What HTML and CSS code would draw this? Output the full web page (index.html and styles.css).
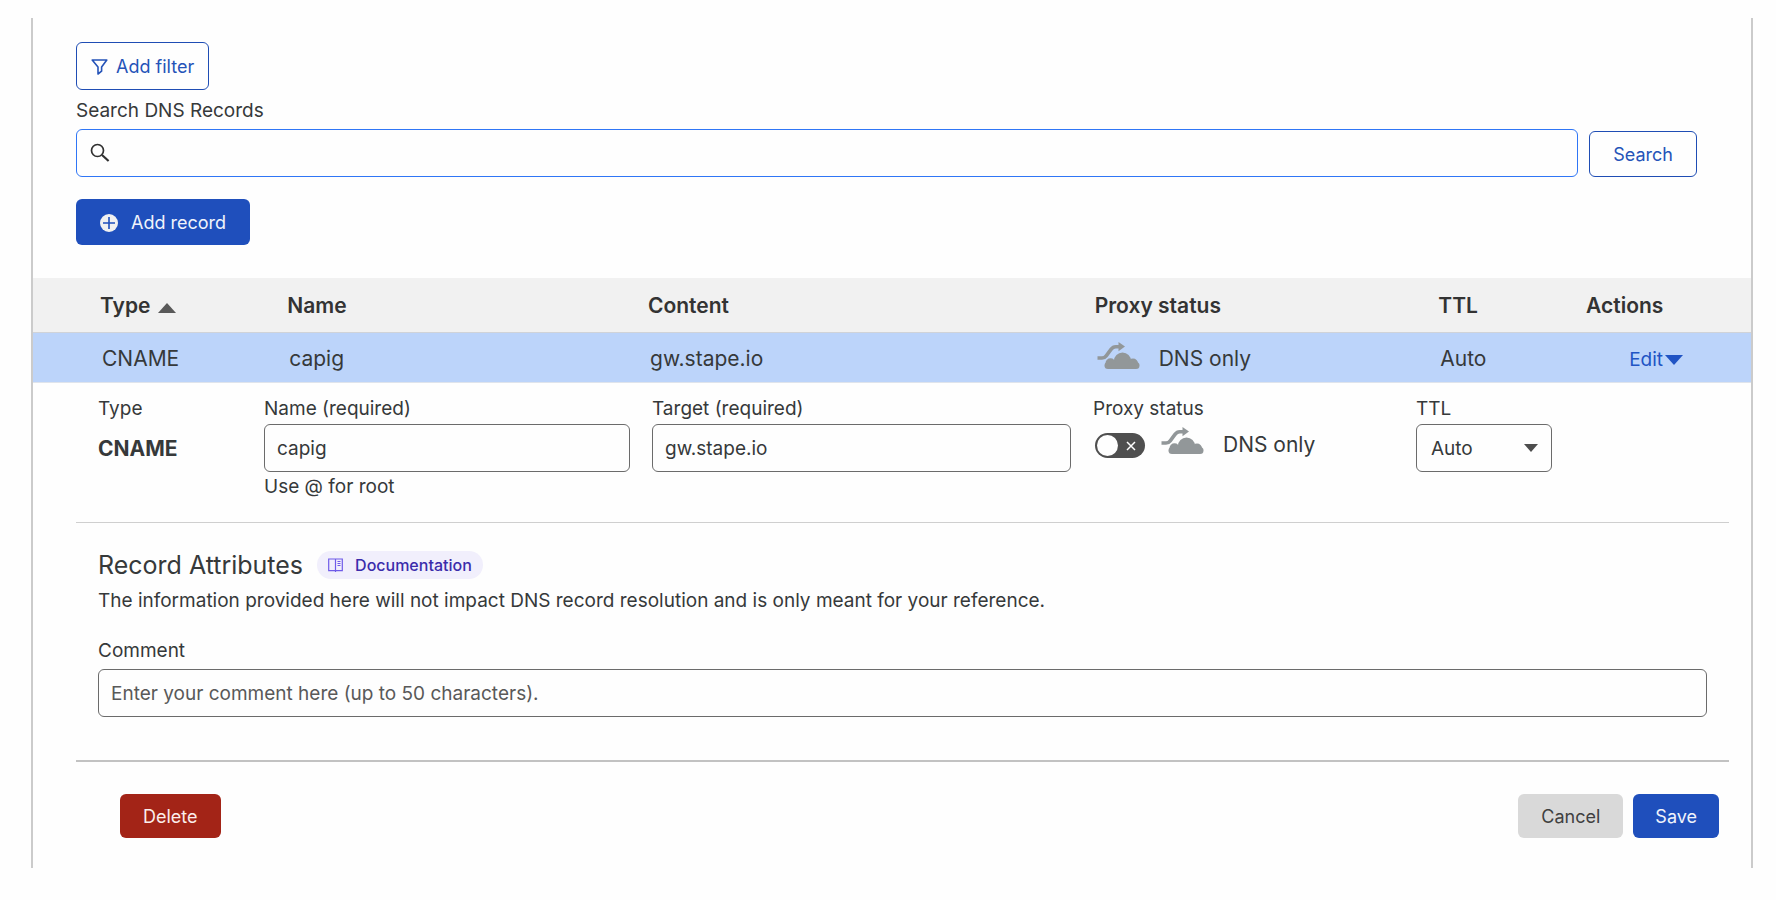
FILE: index.html
```html
<!DOCTYPE html>
<html lang="en">
<head>
<meta charset="utf-8">
<title>DNS Records</title>
<link rel="stylesheet" href="styles.css">
</head>
<body>
<svg class="sprite" aria-hidden="true">
  <symbol id="cloud" viewBox="0 0 43 27">
    <path d="M.5 16H5c2 0 3.200-.9 4.200-2.200L14 7.400c1.300-1.800 2.600-2.700 4.800-2.700H23" fill="none" stroke="currentColor" stroke-width="3.600"/>
    <path d="M21.500 0l6.500 4.500-6.500 4.700z" fill="currentColor"/>
    <g fill="currentColor">
      <circle cx="25.500" cy="19" r="8.600"/>
      <circle cx="13.500" cy="21.200" r="5"/>
      <circle cx="36" cy="21.500" r="5"/>
      <rect x="7.500" y="20" width="35" height="7" rx="3.500"/>
    </g>
  </symbol>
</svg>
<main class="panel">
  <form class="toolbar">
    <button type="button" class="btn btn-outline btn-filter">
      <svg class="icon" width="17" height="16" viewBox="0 0 17 16" aria-hidden="true"><path d="M1.200 1h14.600L10.600 8v4.200L7 15V8z" fill="none" stroke="currentColor" stroke-width="1.600" stroke-linejoin="round"/></svg>
      Add filter
    </button>
    <label class="label" for="search">Search DNS Records</label>
    <div class="search-row">
      <div class="search-box">
        <svg class="icon search-icon" width="20" height="20" viewBox="0 0 20 20" aria-hidden="true"><circle cx="7.500" cy="7.500" r="6" fill="none" stroke="currentColor" stroke-width="1.700"/><path d="M12 12l6.600 6" fill="none" stroke="currentColor" stroke-width="2.200"/></svg>
        <input id="search" class="search-input" type="text">
      </div>
      <button type="button" class="btn btn-outline">Search</button>
    </div>
    <button type="button" class="btn btn-primary btn-add">
      <svg class="icon" width="18" height="18" viewBox="0 0 18 18" aria-hidden="true"><circle cx="9" cy="9" r="9" fill="#f1f1f1"/><path d="M9 3v12M3 9h12" stroke="#1f4fbc" stroke-width="1.600"/></svg>
      Add record
    </button>
  </form>

  <table class="records">
    <colgroup><col class="c-type"><col class="c-name"><col class="c-content"><col class="c-proxy"><col class="c-ttl"><col class="c-actions"></colgroup>
    <thead>
      <tr>
        <th scope="col">Type <svg class="sort" width="18" height="10" viewBox="0 0 18 10" aria-hidden="true"><path d="M9 0l9 10H0z" fill="#595959"/></svg></th>
        <th scope="col">Name</th>
        <th scope="col">Content</th>
        <th scope="col">Proxy status</th>
        <th scope="col">TTL</th>
        <th scope="col">Actions</th>
      </tr>
    </thead>
    <tbody>
      <tr>
        <td>CNAME</td>
        <td>capig</td>
        <td>gw.stape.io</td>
        <td><span class="status"><svg class="cloud" width="43" height="27" aria-hidden="true"><use href="#cloud"/></svg>DNS only</span></td>
        <td>Auto</td>
        <td class="actions"><button type="button" class="edit">Edit<svg width="18" height="10" viewBox="0 0 18 10" aria-hidden="true"><path d="M0 0h18L9 10z" fill="currentColor"/></svg></button></td>
      </tr>
    </tbody>
  </table>

  <form class="editor">
    <div class="fields">
      <div class="field">
        <span class="label">Type</span>
        <strong class="type-value">CNAME</strong>
      </div>
      <div class="field">
        <label class="label" for="name">Name (required)</label>
        <input id="name" class="input" type="text" value="capig">
        <span class="label">Use @ for root</span>
      </div>
      <div class="field">
        <label class="label" for="target">Target (required)</label>
        <input id="target" class="input" type="text" value="gw.stape.io">
      </div>
      <div class="field">
        <label class="label" for="proxy">Proxy status</label>
        <div class="proxy-row">
          <span class="toggle">
            <input id="proxy" class="toggle-input" type="checkbox">
            <svg class="toggle-x" width="10" height="10" viewBox="0 0 10 10" aria-hidden="true"><path d="M1 1l8 8M9 1L1 9" stroke="#fff" stroke-width="1.500"/></svg>
          </span>
          <span class="status"><svg class="cloud" width="43" height="27" aria-hidden="true"><use href="#cloud"/></svg>DNS only</span>
        </div>
      </div>
      <div class="field">
        <label class="label" for="ttl">TTL</label>
        <div class="select">
          <select id="ttl" class="input"><option>Auto</option></select>
          <svg class="select-arrow" width="14" height="8" viewBox="0 0 14 8" aria-hidden="true"><path d="M0 0h14L7 8z" fill="#4d4d4d"/></svg>
        </div>
      </div>
    </div>

    <section class="attributes">
      <div class="heading-row">
        <h2 class="heading">Record Attributes</h2>
        <a class="badge" href="#">
          <svg width="15" height="14" viewBox="0 0 15 14" aria-hidden="true"><path d="M.7 1h6.800v11.600H.7zM7.500 1h6.800v11.600H7.500zM7.500 12v2M9.500 3.500h3M9.500 5.500h3M9.500 7.500h3" fill="none" stroke="#6f5be8" stroke-width="1.200"/></svg>
          Documentation
        </a>
      </div>
      <p class="description">The information provided here will not impact DNS record resolution and is only meant for your reference.</p>
      <div class="field">
        <label class="label" for="comment">Comment</label>
        <input id="comment" class="input" type="text" placeholder="Enter your comment here (up to 50 characters).">
      </div>
    </section>

    <div class="footer">
      <button type="button" class="btn btn-danger">Delete</button>
      <div class="footer-right">
        <button type="button" class="btn btn-neutral">Cancel</button>
        <button type="button" class="btn btn-primary">Save</button>
      </div>
    </div>
  </form>
</main>
</body>
</html>
```

FILE: styles.css
```css
* {
  box-sizing: border-box;
}

body {
  margin: 0;
  padding: 18px 23px 32px 31px;
  background: #fefefe;
  color: #36393a;
  font: 19px/24px Inter, "Open Sans", sans-serif;
}

.sprite {
  display: none;
}

.panel {
  border: solid #cbcbcb;
  border-width: 0 2px;
}

.toolbar {
  display: flex;
  flex-direction: column;
  align-items: flex-start;
  padding: 24px 54px 33px 43px;
}

.btn {
  display: inline-flex;
  align-items: center;
  justify-content: center;
  height: 44px;
  padding: 2px 22px 0;
  border: 0;
  border-radius: 6px;
  font: inherit;
  font-size: 18px;
  white-space: nowrap;
}

.btn-outline {
  height: 46px;
  border: 1px solid #1f4db4;
  background: #fefefe;
  color: #2553b8;
  padding: 2px 23px 0;
}

.btn-filter {
  gap: 8px;
  height: 48px;
  padding: 2px 14px 0;
  margin-bottom: 9px;
}

.btn-primary {
  background: #1f4fbc;
  color: #f0f3fb;
}

.btn-danger {
  padding: 2px 23px 0;
  background: #a32417;
  color: #fbeeec;
}

.btn-neutral {
  padding: 2px 23px 0;
  background: #d9d9d9;
  color: #404040;
}

.btn-add {
  gap: 13px;
  height: 46px;
  padding: 1px 24px 0;
}

.search-row {
  display: flex;
  align-items: flex-end;
  align-self: stretch;
  gap: 11px;
  margin: 6px 0 22px;
}

.search-box {
  display: flex;
  align-items: center;
  flex: 1;
  gap: 8px;
  height: 48px;
  padding: 0 13px;
  border: 1px solid #2f76f6;
  border-radius: 6px;
}

.search-icon {
  color: #303030;
}

.search-input {
  flex: 1;
  border: 0;
  outline: 0;
  background: none;
  font: inherit;
}

.records {
  width: 100%;
  border-collapse: collapse;
  table-layout: fixed;
  font-size: 21px;
}

.c-type { width: 14.8%; }
.c-name { width: 21%; }
.c-content { width: 26%; }
.c-proxy { width: 20%; }
.c-ttl { width: 8.6%; }
.c-actions { width: 9.6%; }

.records th {
  padding: 2px 0 0;
  text-align: left;
}

.records td {
  padding: 4px 0 0 2px;
  text-align: left;
}

.records th:first-child {
  padding-left: 67px;
}

.records td:first-child {
  padding-left: 69px;
}

.records th {
  height: 54px;
  background: #f1f1f1;
  color: #333;
  font-weight: 600;
}

.records td {
  height: 50px;
  border-top: 1px solid #d0d3d8;
  border-bottom: 1px solid #dfe4ec;
  background: #bcd4fa;
}

.sort {
  margin-left: 2px;
}

.status {
  display: flex;
  align-items: center;
  gap: 19px;
  font-size: 21px;
}

.cloud {
  margin-bottom: 8px;
  color: #929799;
}

.records td.actions {
  padding-right: 68px;
  text-align: right;
}

.edit {
  display: inline-flex;
  align-items: center;
  gap: 2px;
  padding: 0;
  border: 0;
  background: none;
  color: #2154c4;
  font: inherit;
  font-size: 19px;
}

.editor {
  margin: 0 22px 0 43px;
}

.fields {
  display: grid;
  grid-template-columns: 144fr 366fr 419fr 301fr 291fr;
  gap: 22px;
  padding: 14px 22px 23px;
  border-bottom: 1px solid #cfcfcf;
}

.field {
  display: flex;
  flex-direction: column;
  gap: 3px;
}

.type-value {
  font-size: 21px;
  font-weight: 700;
  line-height: 50px;
}

.input {
  width: 100%;
  height: 48px;
  padding: 2px 12px 0;
  border: 1px solid #6b6b6b;
  border-radius: 6px;
  background: #fefefe;
  color: #36393a;
  font: inherit;
}

.input::placeholder {
  color: #595959;
  opacity: 1;
}

.proxy-row {
  display: flex;
  align-items: center;
  gap: 16px;
  height: 44px;
  padding-left: 2px;
}

.proxy-row .status {
  padding-bottom: 2px;
}

.toggle {
  display: grid;
  align-items: center;
}

.toggle-input,
.toggle-x {
  grid-area: 1 / 1;
}

.toggle-input {
  appearance: none;
  display: flex;
  width: 50px;
  height: 25px;
  margin: 0;
  padding: 2px;
  border-radius: 13px;
  background: #4f4f4f;
}

.toggle-input::before {
  width: 21px;
  height: 21px;
  border-radius: 50%;
  background: #fefefe;
  content: "";
}

.toggle-x {
  justify-self: end;
  margin-right: 9px;
  pointer-events: none;
}

.select {
  display: grid;
  align-items: center;
  width: 136px;
}

.select .input,
.select-arrow {
  grid-area: 1 / 1;
}

.select .input {
  appearance: none;
  padding: 2px 14px 0;
}

.select-arrow {
  justify-self: end;
  margin-right: 14px;
  pointer-events: none;
}

.attributes {
  padding: 26px 22px 43px;
  border-bottom: 2px solid #c2c2c2;
}

.heading-row {
  display: flex;
  align-items: center;
  gap: 14px;
}

.heading {
  margin: 0;
  font-size: 25px;
  font-weight: 400;
  line-height: 32px;
}

.badge {
  display: inline-flex;
  align-items: center;
  gap: 12px;
  height: 28px;
  padding: 0 11px;
  border-radius: 14px;
  background: #f1effc;
  color: #3b2cab;
  font-size: 16px;
  font-weight: 500;
  text-decoration: none;
}

.description {
  margin: 8px 0 26px;
}

.attributes .field {
  gap: 6px;
}

.footer,
.footer-right {
  display: flex;
  justify-content: space-between;
  gap: 10px;
}

.footer {
  padding: 32px 10px 30px 44px;
}
```
